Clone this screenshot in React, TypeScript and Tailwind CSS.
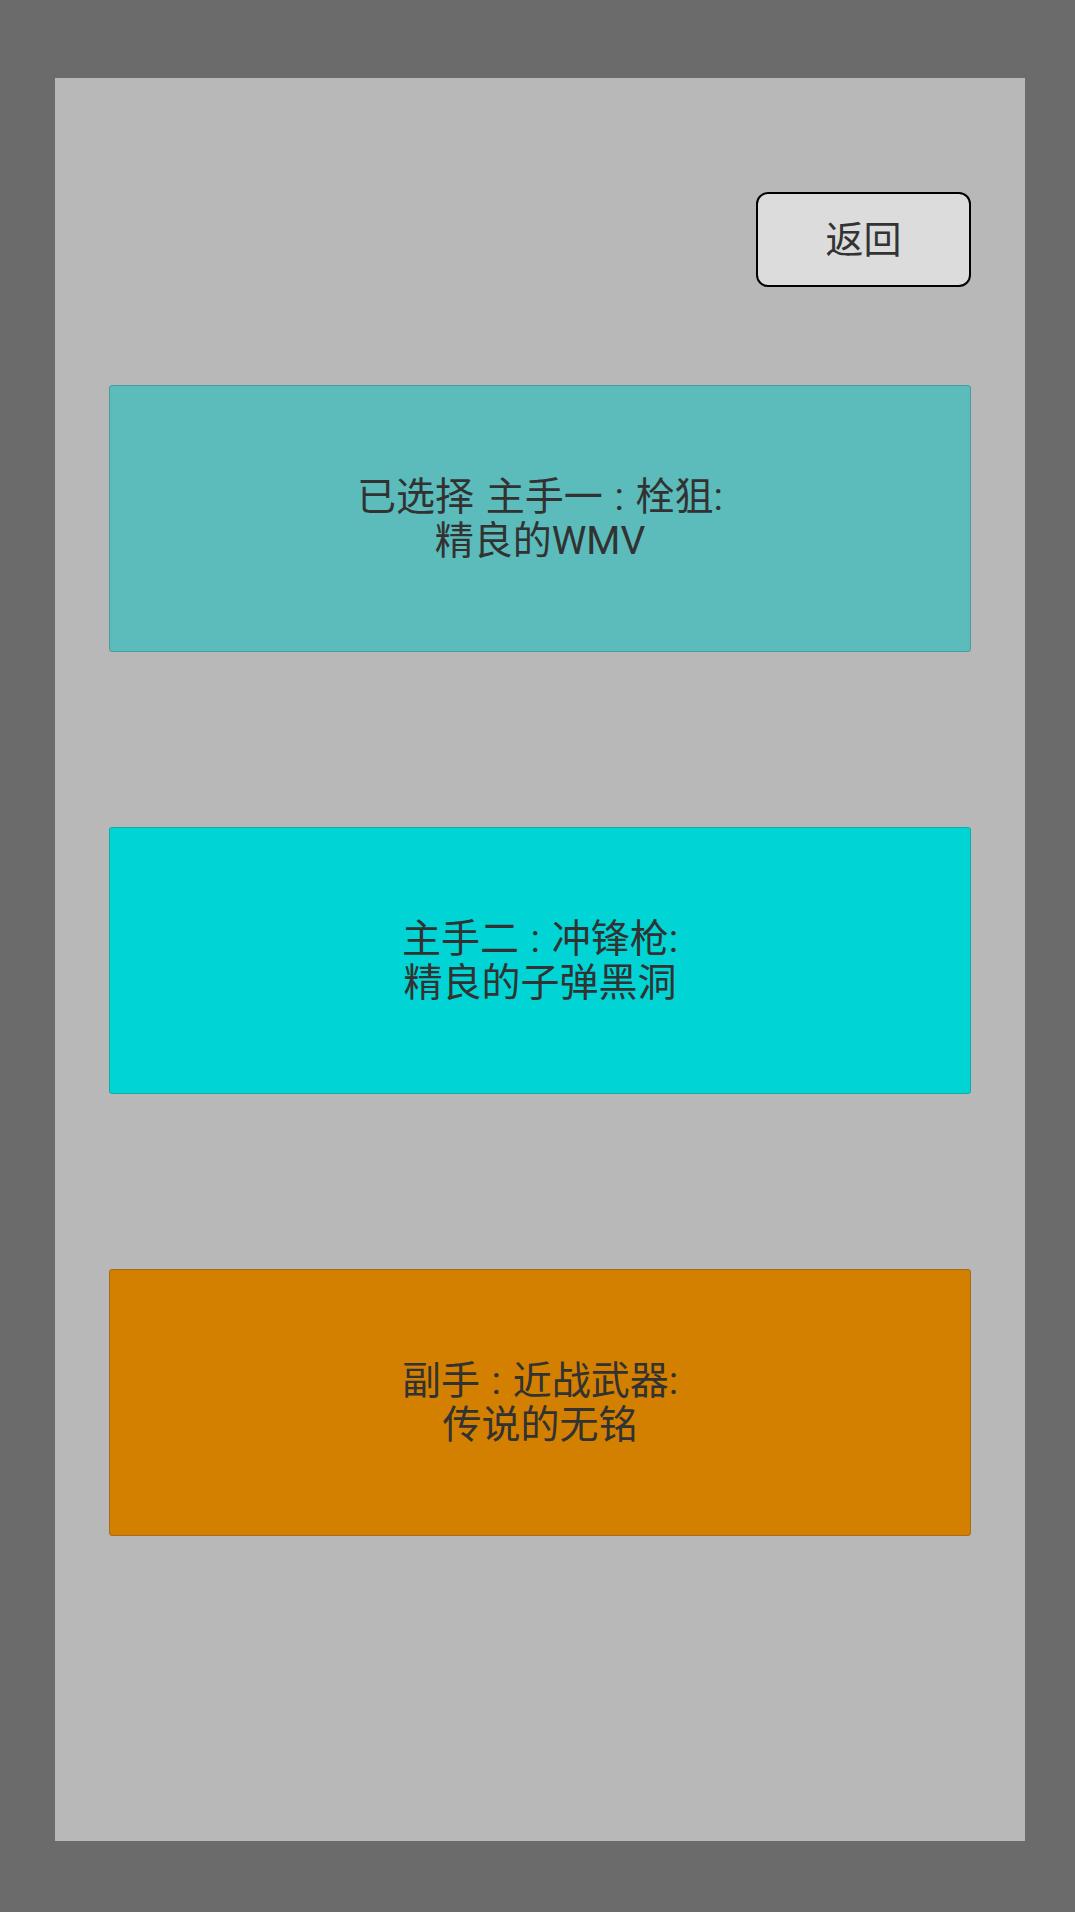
const cards = [
  { text: '已选择 主手一 : 栓狙:\n精良的WMV', bg: 'bg-[#5bbcbb] border-[#4a9d9c]' },
  { text: '主手二 : 冲锋枪:\n精良的子弹黑洞', bg: 'bg-[#00d4d4] border-[#12a9a9]' },
  { text: '副手 : 近战武器:\n传说的无铭', bg: 'bg-[#d38000] border-[#a86a1c]' },
]

export default function App() {
  return (
    <div className="min-h-[1912px] w-full bg-[#6b6b6b] pl-[55px] pr-[50px] pt-[78px] pb-[71px] font-['Roboto','Noto_Sans_CJK_SC',sans-serif] text-[#323232]">
      <div className="flex h-[1763px] w-[970px] flex-col bg-[#b8b8b8] px-[54px] pt-[114px]">
        <div className="flex justify-end">
          <button className="h-[95px] w-[215px] rounded-[12px] border-2 border-black bg-[#dcdcdc] text-[38px] leading-none text-[#333]">
            返回
          </button>
        </div>

        <div className="mt-[98px] flex flex-col gap-[175px]">
          {cards.map((card, i) => (
            <div
              key={i}
              className={`flex h-[267px] items-center justify-center rounded-[3px] border ${card.bg}`}
            >
              <p className="whitespace-pre-line text-center text-[39px] leading-[44px] [word-spacing:2px]">{card.text}</p>
            </div>
          ))}
        </div>
      </div>
    </div>
  )
}
